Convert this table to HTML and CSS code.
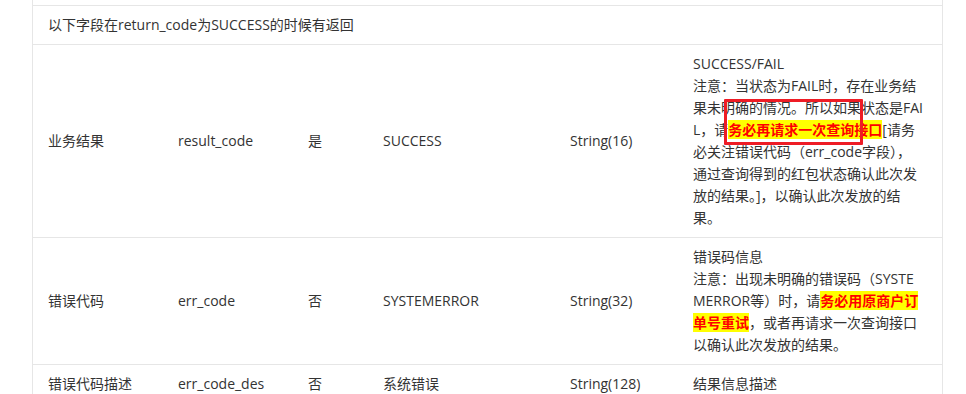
FILE: index.html
```html
<!DOCTYPE html>
<html lang="zh-CN">
<head>
<meta charset="utf-8">
<title>参数说明</title>
<link rel="stylesheet" href="styles.css">
</head>
<body>
<div class="page">
  <table class="params">
    <colgroup>
      <col class="c-name">
      <col class="c-field">
      <col class="c-req">
      <col class="c-example">
      <col class="c-type">
      <col class="c-desc">
    </colgroup>
    <tbody>
      <tr class="prev"><td colspan="6"></td></tr>
      <tr><td colspan="6">以下字段在return_code为SUCCESS的时候有返回</td></tr>
      <tr>
        <td>业务结果</td>
        <td>result_code</td>
        <td>是</td>
        <td>SUCCESS</td>
        <td>String(16)</td>
        <td class="desc">SUCCESS/FAIL<br>注意：当状态为FAIL时，存在业务结<br>果未明确的情况。所以如果状态是FAI<br>L，请<span class="hl">务必再请求一次查询接口</span>[请务<br>必关注错误代码（err_code字段），<br>通过查询得到的红包状态确认此次发<br>放的结果。]，以确认此次发放的结<br>果。</td>
      </tr>
      <tr>
        <td>错误代码</td>
        <td>err_code</td>
        <td>否</td>
        <td>SYSTEMERROR</td>
        <td>String(32)</td>
        <td class="desc">错误码信息<br>注意：出现未明确的错误码（SYSTE<br>MERROR等）时，请<span class="hl">务必用原商户订<br>单号重试</span>，或者再请求一次查询接口<br>以确认此次发放的结果。</td>
      </tr>
      <tr>
        <td>错误代码描述</td>
        <td>err_code_des</td>
        <td>否</td>
        <td>系统错误</td>
        <td>String(128)</td>
        <td class="desc">结果信息描述</td>
      </tr>
    </tbody>
  </table>
  <div class="annot"></div>
</div>
</body>
</html>
```
FILE: styles.css
```css
html, body {
  margin: 0;
  padding: 0;
  background: #fff;
}

.page {
  position: relative;
  font-family: "Open Sans", "Noto Sans CJK SC", sans-serif;
  font-size: 14px;
  line-height: 22px;
  color: #333;
}

.params {
  margin-left: 32px;
  width: 911px;
  table-layout: fixed;
  border-collapse: separate;
  border-spacing: 0;
  border-left: 1px solid #e6e6e6;
  border-right: 1px solid #e6e6e6;
}

.c-name { width: 130px; }
.c-field { width: 130px; }
.c-req { width: 75px; }
.c-example { width: 187px; }
.c-type { width: 123px; }
.c-desc { width: 264px; }

.params td {
  padding: 8px 15px;
  border-bottom: 1px solid #e6e6e6;
  vertical-align: middle;
  text-align: left;
  white-space: nowrap;
}

.params .prev td {
  padding: 0;
  height: 5px;
}

.params td.desc {
  white-space: nowrap;
}

.hl {
  color: #ff0000;
  background: #ffff00;
  font-weight: bold;
}

.annot {
  position: absolute;
  left: 724px;
  top: 99px;
  width: 133px;
  height: 40px;
  border: 3px solid #ee1c25;
  border-radius: 1px;
}
```
